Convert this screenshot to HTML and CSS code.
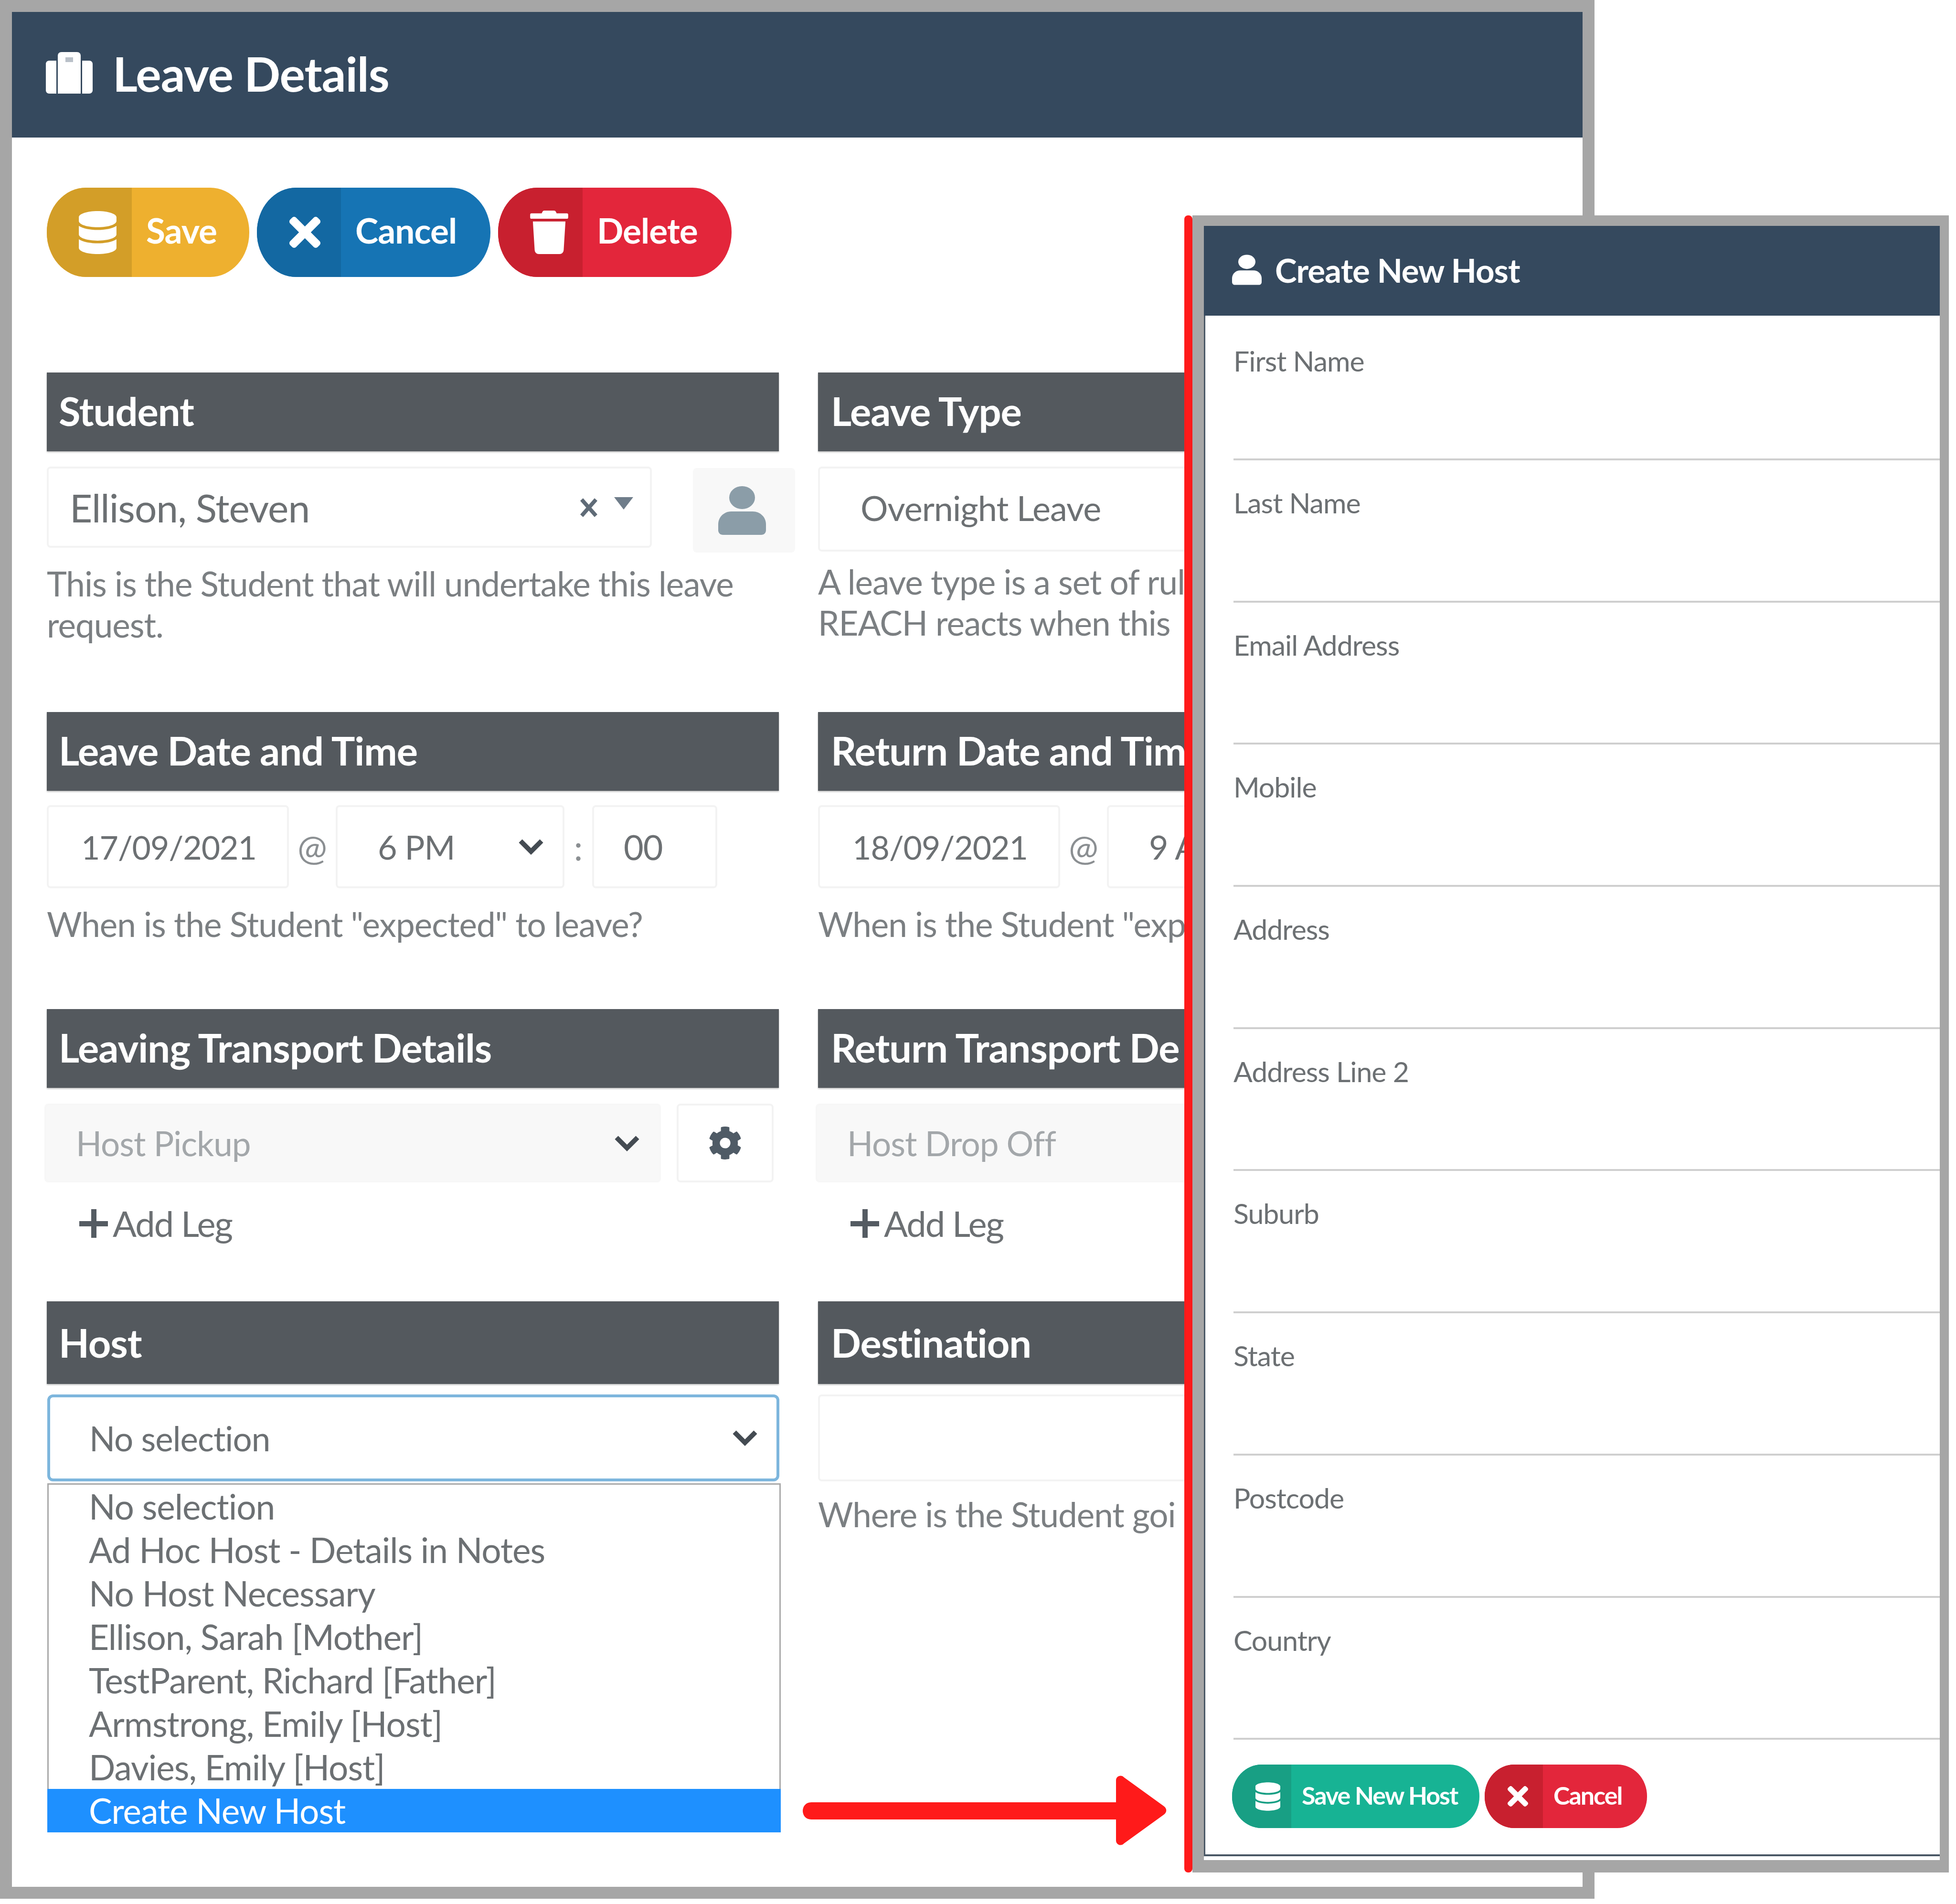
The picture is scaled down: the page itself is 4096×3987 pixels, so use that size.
FILE: index.html
```html
<!DOCTYPE html>
<html lang="en">
<head>
  <meta charset="UTF-8">
  <title>Leave Details</title>
  <link rel="stylesheet" href="styles.css">
</head>
<body>
  <div class="frame">
    <header class="page-head">
      <svg class="suitcase-icon" viewBox="0 0 98 87"><path d="M25 8c0-5 3-8 8-8h32c5 0 8 3 8 8v79H25z"/><path class="suitcase-tag" d="M41 11h16v10H41z"/><path d="M0 25c0-4 3-7 7-7h15v69H7c-4 0-7-3-7-7zM76 18h15c4 0 7 3 7 7v55c0 4-3 7-7 7H76z"/></svg>
      Leave Details
    </header>

    <div class="page-body">
      <div class="action-row">
        <div class="pill pill-save">
          <span class="pill-icon"><svg class="icon-db" viewBox="0 0 448 512"><path d="M448 73.143v45.714C448 159.143 347.667 192 224 192S0 159.143 0 118.857V73.143C0 32.857 100.333 0 224 0s224 32.857 224 73.143zM448 176v102.857C448 319.143 347.667 352 224 352S0 319.143 0 278.857V176c48.125 33.143 136.208 48.572 224 48.572S399.874 209.143 448 176zm0 160v102.857C448 479.143 347.667 512 224 512S0 479.143 0 438.857V336c48.125 33.143 136.208 48.572 224 48.572S399.874 369.143 448 336z"/></svg></span>
          <span class="pill-text">Save</span>
        </div>
        <div class="pill pill-cancel">
          <span class="pill-icon"><svg class="icon-x" viewBox="0 80 352 352"><path d="M242.72 256l100.07-100.07c12.28-12.28 12.28-32.19 0-44.48l-22.24-22.24c-12.28-12.28-32.19-12.28-44.48 0L176 189.28 75.93 89.21c-12.28-12.28-32.19-12.28-44.48 0L9.21 111.45c-12.28 12.28-12.28 32.19 0 44.48L109.28 256 9.21 356.07c-12.28 12.28-12.28 32.19 0 44.48l22.24 22.24c12.28 12.28 32.2 12.28 44.48 0L176 322.72l100.07 100.07c12.28 12.28 32.2 12.28 44.48 0l22.24-22.24c12.28-12.28 12.28-32.19 0-44.48L242.72 256z"/></svg></span>
          <span class="pill-text">Cancel</span>
        </div>
        <div class="pill pill-delete">
          <span class="pill-icon"><svg class="icon-trash" viewBox="0 0 448 512"><path d="M432 32H312l-9.4-18.7A24 24 0 0 0 281.1 0H166.8a23.72 23.72 0 0 0-21.4 13.3L136 32H16A16 16 0 0 0 0 48v32a16 16 0 0 0 16 16h416a16 16 0 0 0 16-16V48a16 16 0 0 0-16-16zM53.2 467a48 48 0 0 0 47.9 45h245.8a48 48 0 0 0 47.9-45L416 128H32z"/></svg></span>
          <span class="pill-text">Delete</span>
        </div>
      </div>

      <div class="field-grid">
        <!-- row 1 -->
        <section>
          <h2 class="bar">Student</h2>
          <div class="control-row student-row">
            <div class="box student-select">
              <span class="student-name">Ellison, Steven</span>
              <svg class="clear-x" viewBox="0 0 38 40"><path d="M4 3l30 34M34 3L4 37"/></svg>
              <span class="caret"></span>
            </div>
            <div class="box person-btn">
              <svg class="person-icon" viewBox="0 0 100 102"><ellipse cx="50" cy="24" rx="27" ry="24"/><path d="M0 92V80c0-15 12-27 28-27h44c16 0 28 12 28 27v12c0 6-4 10-10 10H10C4 102 0 98 0 92z"/></svg>
            </div>
          </div>
          <p class="hint student-hint">This is the Student that will undertake this leave request.</p>
        </section>
        <section class="cut-col">
          <h2 class="bar">Leave Type</h2>
          <div class="control-row student-row">
            <div class="box type-input">Overnight Leave</div>
          </div>
          <p class="hint type-hint">A leave type is a set of rul<br>REACH reacts when this</p>
        </section>

        <!-- row 2 -->
        <section>
          <h2 class="bar">Leave Date and Time</h2>
          <div class="control-row date-row">
            <div class="box date-box">17/09/2021</div>
            <span class="sep at-sep">@</span>
            <div class="box time-box">6 PM<svg class="chev" viewBox="0 0 56 36"><path d="M6 6l22 22L50 6"/></svg></div>
            <span class="sep colon-sep">:</span>
            <div class="box min-box">00</div>
          </div>
          <p class="hint date-hint">When is the Student "expected" to leave?</p>
        </section>
        <section class="cut-col">
          <h2 class="bar">Return Date and Tim</h2>
          <div class="control-row date-row">
            <div class="box date-box">18/09/2021</div>
            <span class="sep at-sep">@</span>
            <div class="box time-box cut-time">9 A</div>
          </div>
          <p class="hint date-hint">When is the Student "exp</p>
        </section>

        <!-- row 3 -->
        <section>
          <h2 class="bar">Leaving Transport Details</h2>
          <div class="control-row transport-row">
            <div class="box transport-select">Host Pickup<svg class="chev" viewBox="0 0 56 36"><path d="M6 6l22 22L50 6"/></svg></div>
            <div class="box gear-btn">
              <svg class="gear-icon" viewBox="0 0 512 512"><path d="M487.4 315.7l-42.6-24.6c4.3-23.2 4.3-47 0-70.2l42.6-24.6c4.9-2.8 7.1-8.6 5.5-14-11.1-35.6-30-67.8-54.7-94.6-3.8-4.1-10-5.1-14.8-2.3L380.8 110c-17.9-15.4-38.5-27.3-60.8-35.1V25.8c0-5.6-3.9-10.5-9.4-11.7-36.7-8.2-74.3-7.8-109.2 0-5.5 1.2-9.4 6.1-9.4 11.7V75c-22.2 7.9-42.8 19.8-60.8 35.1L88.7 85.5c-4.9-2.8-11-1.9-14.8 2.3-24.7 26.7-43.6 58.9-54.7 94.6-1.7 5.4.6 11.2 5.5 14L67.3 221c-4.3 23.2-4.3 47 0 70.2l-42.6 24.6c-4.9 2.8-7.1 8.6-5.5 14 11.1 35.6 30 67.8 54.7 94.6 3.8 4.1 10 5.1 14.8 2.3l42.6-24.6c17.9 15.4 38.5 27.3 60.8 35.1v49.2c0 5.6 3.9 10.5 9.4 11.7 36.7 8.2 74.3 7.8 109.2 0 5.5-1.2 9.4-6.1 9.4-11.7v-49.2c22.2-7.9 42.8-19.8 60.8-35.1l42.6 24.6c4.9 2.8 11 1.9 14.8-2.3 24.7-26.7 43.6-58.9 54.7-94.6 1.5-5.5-.7-11.3-5.6-14.1zM256 336c-44.1 0-80-35.9-80-80s35.9-80 80-80 80 35.9 80 80-35.9 80-80 80z"/></svg>
            </div>
          </div>
          <div class="add-leg"><span class="plus"></span>Add Leg</div>
        </section>
        <section class="cut-col">
          <h2 class="bar">Return Transport De</h2>
          <div class="control-row transport-row">
            <div class="box transport-select">Host Drop Off</div>
          </div>
          <div class="add-leg"><span class="plus"></span>Add Leg</div>
        </section>

        <!-- row 4 -->
        <section>
          <h2 class="bar bar-tall">Host</h2>
          <div class="box host-select">No selection<svg class="chev" viewBox="0 0 56 36"><path d="M6 6l22 22L50 6"/></svg></div>
          <ul class="host-list">
            <li>No selection</li>
            <li>Ad Hoc Host - Details in Notes</li>
            <li>No Host Necessary</li>
            <li>Ellison, Sarah [Mother]</li>
            <li>TestParent, Richard [Father]</li>
            <li>Armstrong, Emily [Host]</li>
            <li>Davies, Emily [Host]</li>
            <li class="picked">Create New Host</li>
          </ul>
        </section>
        <section class="cut-col">
          <h2 class="bar bar-tall">Destination</h2>
          <div class="box dest-input"></div>
          <p class="hint dest-hint">Where is the Student goi</p>
        </section>
      </div>
    </div>

    <svg class="arrow" viewBox="0 0 762 146"><path d="M18 56h638V10c0-9 11-13 17-6l83 60c7 5 7 13 0 18l-83 60c-6 7-17 3-17-6V92H18C-6 92-6 56 18 56z"/></svg>

    <aside class="host-panel">
      <div class="host-card">
        <div class="host-head">
          <svg class="host-head-icon" viewBox="0 0 100 102"><ellipse cx="50" cy="24" rx="29" ry="24"/><path d="M0 92V80c0-15 12-27 28-27h44c16 0 28 12 28 27v12c0 6-4 10-10 10H10C4 102 0 98 0 92z"/></svg>
          Create New Host
        </div>
        <div class="host-field host-field-first"><label>First Name</label></div>
        <div class="host-field"><label>Last Name</label></div>
        <div class="host-field"><label>Email Address</label></div>
        <div class="host-field"><label>Mobile</label></div>
        <div class="host-field"><label>Address</label></div>
        <div class="host-field"><label>Address Line 2</label></div>
        <div class="host-field"><label>Suburb</label></div>
        <div class="host-field"><label>State</label></div>
        <div class="host-field"><label>Postcode</label></div>
        <div class="host-field"><label>Country</label></div>
        <div class="host-actions">
          <div class="pill pill-small pill-green">
            <span class="pill-icon"><svg class="icon-db-small" viewBox="0 0 448 512"><path d="M448 73.143v45.714C448 159.143 347.667 192 224 192S0 159.143 0 118.857V73.143C0 32.857 100.333 0 224 0s224 32.857 224 73.143zM448 176v102.857C448 319.143 347.667 352 224 352S0 319.143 0 278.857V176c48.125 33.143 136.208 48.572 224 48.572S399.874 209.143 448 176zm0 160v102.857C448 479.143 347.667 512 224 512S0 479.143 0 438.857V336c48.125 33.143 136.208 48.572 224 48.572S399.874 369.143 448 336z"/></svg></span>
            <span class="pill-text">Save New Host</span>
          </div>
          <div class="pill pill-small pill-delete pill-small-cancel">
            <span class="pill-icon"><svg class="icon-x-small" viewBox="0 80 352 352"><path d="M242.72 256l100.07-100.07c12.28-12.28 12.28-32.19 0-44.48l-22.24-22.24c-12.28-12.28-32.19-12.28-44.48 0L176 189.28 75.93 89.21c-12.28-12.28-32.19-12.28-44.48 0L9.21 111.45c-12.28 12.28-12.28 32.19 0 44.48L109.28 256 9.21 356.07c-12.28 12.28-12.28 32.19 0 44.48l22.24 22.24c12.28 12.28 32.2 12.28 44.48 0L176 322.72l100.07 100.07c12.28 12.28 32.2 12.28 44.48 0l22.24-22.24c12.28-12.28 12.28-32.19 0-44.48L242.72 256z"/></svg></span>
            <span class="pill-text">Cancel</span>
          </div>
        </div>
      </div>
    </aside>
  </div>
</body>
</html>
```

FILE: styles.css
```css
html, body {
  margin: 0;
  height: 100%;
  overflow: hidden;
  background: #fff;
}
body {
  font-family: 'Lato', 'Open Sans', sans-serif;
  color: #6c7073;
}
.frame {
  position: relative;
  width: 3339px;
  height: 3976px;
  box-sizing: border-box;
  border: 25px solid #a6a6a6;
  background: #fff;
}

/* top header */
.page-head {
  height: 263px;
  background: #35495e;
  color: #fff;
  display: flex;
  align-items: center;
  padding-left: 72px;
  gap: 42px;
  font-size: 100px;
  font-weight: 700;
  letter-spacing: -1px;
  padding-bottom: 8px;
  box-sizing: border-box;
}
.suitcase-icon {
  width: 98px;
  height: 87px;
  fill: #fff;
  margin-left: -1px;
}
.suitcase-tag { fill: #b9c0c8; }
.page-body {
  padding: 105px 0 0 73px;
}

/* pill buttons */
.action-row {
  display: flex;
  gap: 16px;
}
.pill {
  display: flex;
  height: 187px;
  border-radius: 82px / 93px;
  overflow: hidden;
  color: #fff;
  font-size: 73px;
  font-weight: 700;
  letter-spacing: -1px;
}
.pill-icon {
  display: flex;
  align-items: center;
  justify-content: center;
  flex: none;
  box-sizing: border-box;
}
.pill-text {
  flex: 1;
  display: flex;
  align-items: center;
  padding: 0 0 10px 30px;
}
.pill-save { width: 424px; background: #eeb02f; }
.pill-save .pill-icon { width: 178px; background: #d39e28; padding-left: 34px; }
.pill-cancel { width: 489px; background: #1674b4; }
.pill-cancel .pill-icon { width: 176px; background: #1368a2; padding-left: 24px; }
.pill-delete { width: 489px; background: #e3263b; }
.pill-delete .pill-icon { width: 177px; background: #c8202f; padding-left: 36px; }
.icon-db { width: 79px; height: 90px; fill: #fff; }
.icon-x { width: 65px; height: 65px; fill: #fff; }
.icon-trash { width: 80px; height: 91px; fill: #fff; }

/* form */
.field-grid {
  margin-top: 200px;
  display: grid;
  grid-template-columns: 1533px 800px;
  grid-template-rows: 711px 622px 612px auto;
  column-gap: 82px;
}
/* the right column runs in under the panel, its texts stop at the red line */
.cut-col {
  white-space: nowrap;
}
.bar {
  margin: 0;
  height: 165px;
  background: #54595e;
  color: #fff;
  font-size: 83px;
  font-weight: 700;
  letter-spacing: -1px;
  line-height: 161px;
  padding-left: 25px;
  box-shadow: 0 2px 3px rgba(0,0,0,0.25);
  white-space: nowrap;
}
.cut-col .bar { padding-left: 27px; }
.bar-tall {
  height: 173px;
  line-height: 173px;
}
.box {
  box-sizing: border-box;
  background: #fff;
  border: 4px solid #f3f3f3;
  border-radius: 8px;
  display: flex;
  align-items: center;
  font-size: 72px;
  letter-spacing: -1px;
  color: #6c7073;
}
.control-row {
  display: flex;
  margin-top: 32px;
}
.hint {
  margin: 0;
  font-size: 71px;
  line-height: 86px;
  letter-spacing: -1px;
  color: #7b7f82;
}
.chev {
  width: 56px;
  height: 36px;
  fill: none;
  stroke: #444b52;
  stroke-width: 10;
  margin-left: auto;
  flex: none;
}

/* student row */
.student-row {
  align-items: flex-start;
}
.student-select {
  width: 1267px;
  height: 170px;
  padding-left: 44px;
  flex: none;
  position: relative;
}
.student-name {
  flex: 1;
  font-size: 82px;
}
.clear-x {
  position: absolute;
  left: 1112px;
  top: 62px;
  width: 38px;
  height: 40px;
  fill: none;
  stroke: #5f6b77;
  stroke-width: 8;
}
.caret {
  position: absolute;
  left: 1184px;
  top: 60px;
  border-left: 20px solid transparent;
  border-right: 20px solid transparent;
  border-top: 26px solid #6f7d8a;
}
.person-btn {
  flex: none;
  width: 214px;
  height: 177px;
  margin: 3px 0 0 86px;
  padding-right: 8px;
  background: #f8f8f8;
  border-color: #f8f8f8;
  justify-content: center;
}
.person-icon {
  width: 100px;
  height: 102px;
  fill: #8b9da8;
}
.type-input {
  width: 800px;
  height: 178px;
  padding-left: 85px;
  padding-bottom: 6px;
}
.student-hint { margin-top: 22px; }
.type-hint { margin-top: 20px; }

/* date row */
.date-row { margin-top: 30px; }
.date-row .box { height: 174px; flex: none; }
.date-box { width: 507px; padding-left: 68px; }
.date-row .date-box { font-size: 68px; }
.date-row .time-box { font-size: 70px; }
.time-box { width: 479px; padding: 0 38px 0 84px; }
.date-row .cut-time { width: 200px; padding-right: 0; }
.min-box { width: 262px; padding-left: 62px; }
.sep {
  flex: none;
  display: flex;
  align-items: center;
  justify-content: center;
  font-size: 74px;
  color: #8b8f92;
}
.at-sep { width: 98px; }
.colon-sep { width: 58px; }
.date-hint { margin-top: 32px; }

/* transport row */
.transport-row {
  margin: 33px 0 0 -5px;
}
.transport-select {
  width: 1291px;
  height: 165px;
  flex: none;
  padding: 0 39px 0 62px;
  background: #f8f8f8;
  border-color: #f7f7f7;
  color: #a3a7aa;
  font-size: 71px;
}
.cut-col .transport-select { width: 805px; }
.gear-btn {
  width: 203px;
  height: 165px;
  flex: none;
  margin-left: 33px;
  justify-content: center;
}
.gear-icon {
  width: 71px;
  height: 71px;
  fill: #4f5b66;
}
.add-leg {
  margin: 43px 0 0 68px;
  display: flex;
  align-items: center;
  font-size: 74px;
  line-height: 86px;
  letter-spacing: -2px;
  color: #6c7073;
}
.plus {
  position: relative;
  width: 60px;
  height: 60px;
  margin-right: 10px;
  background:
    linear-gradient(#545b62, #545b62) center / 100% 11px no-repeat,
    linear-gradient(#545b62, #545b62) center / 11px 100% no-repeat;
}

/* host */
.host-select, .dest-input {
  height: 182px;
  margin-top: 22px;
}
.host-select {
  width: 1533px;
  margin-left: 1px;
  border: 6px solid #7db6dd;
  border-radius: 12px;
  padding: 0 38px 0 82px;
  color: #6c7073;
  font-size: 71px;
}
.host-list {
  list-style: none;
  margin: 4px 0 0 1px;
  padding: 0;
  width: 1536px;
  box-sizing: border-box;
  border: 3px solid #aaaaaa;
  border-bottom: 0;
  font-size: 73px;
  letter-spacing: -1px;
}
.host-list li {
  height: 91px;
  line-height: 91px;
  padding-left: 84px;
  color: #6c7073;
  white-space: nowrap;
}
.host-list li.picked {
  background: #1e90ff;
  color: #fff;
  margin: 0 -3px;
  padding-left: 87px;
}
.dest-input { width: 800px; }
.dest-hint { margin-top: 26px; }

/* arrow between the list and the panel */
.arrow {
  position: absolute;
  left: 1656px;
  top: 3693px;
  width: 762px;
  height: 146px;
  fill: #ff1a1a;
}

/* create new host panel */
.host-panel {
  position: absolute;
  left: 2472px;
  top: 426px;
  width: 1584px;
  height: 3470px;
  box-sizing: border-box;
  border-style: solid;
  border-color: #a6a6a6;
  border-width: 22px 19px 26px 24px;
  background: #fff;
}
.host-panel::before {
  content: "";
  position: absolute;
  left: -41px;
  top: -22px;
  width: 17px;
  height: 3470px;
  background: #ff1a1a;
  border-radius: 8px;
}
.host-card {
  height: 3414px;
  box-sizing: border-box;
  border-left: 3px solid #4a5866;
  border-bottom: 4px solid #4a5866;
}
.host-head {
  height: 188px;
  margin-left: -3px;
  background: #35495e;
  color: #fff;
  display: flex;
  align-items: center;
  padding-left: 59px;
  gap: 28px;
  font-size: 69px;
  font-weight: 700;
  letter-spacing: -1px;
  padding-bottom: 4px;
  box-sizing: border-box;
}
.host-head-icon {
  width: 62px;
  height: 70px;
  fill: #fff;
}
.host-field {
  height: 297.7px;
  box-sizing: border-box;
  margin-left: 59px;
  border-bottom: 4px solid #cfcfcf;
  padding-top: 54px;
}
.host-field-first {
  height: 303px;
  padding-top: 60px;
}
.host-field label {
  font-size: 59px;
  line-height: 70px;
  letter-spacing: -1px;
  color: #6c7073;
}
.host-actions {
  display: flex;
  gap: 11px;
  margin: 52px 0 0 56px;
}
.pill-small {
  height: 133px;
  border-radius: 62px / 66px;
  font-size: 52px;
  letter-spacing: -2px;
}
.pill-small .pill-text { padding: 0 0 6px 22px; }
.pill-green { width: 518px; background: #17b394; }
.pill-green .pill-icon { width: 124px; background: #189f84; padding-left: 26px; }
.pill-small-cancel { width: 340px; }
.pill-small-cancel .pill-icon { width: 122px; padding-left: 16px; }
.icon-db-small { width: 52px; height: 62px; fill: #fff; }
.icon-x-small { width: 43px; height: 43px; fill: #fff; }
```
